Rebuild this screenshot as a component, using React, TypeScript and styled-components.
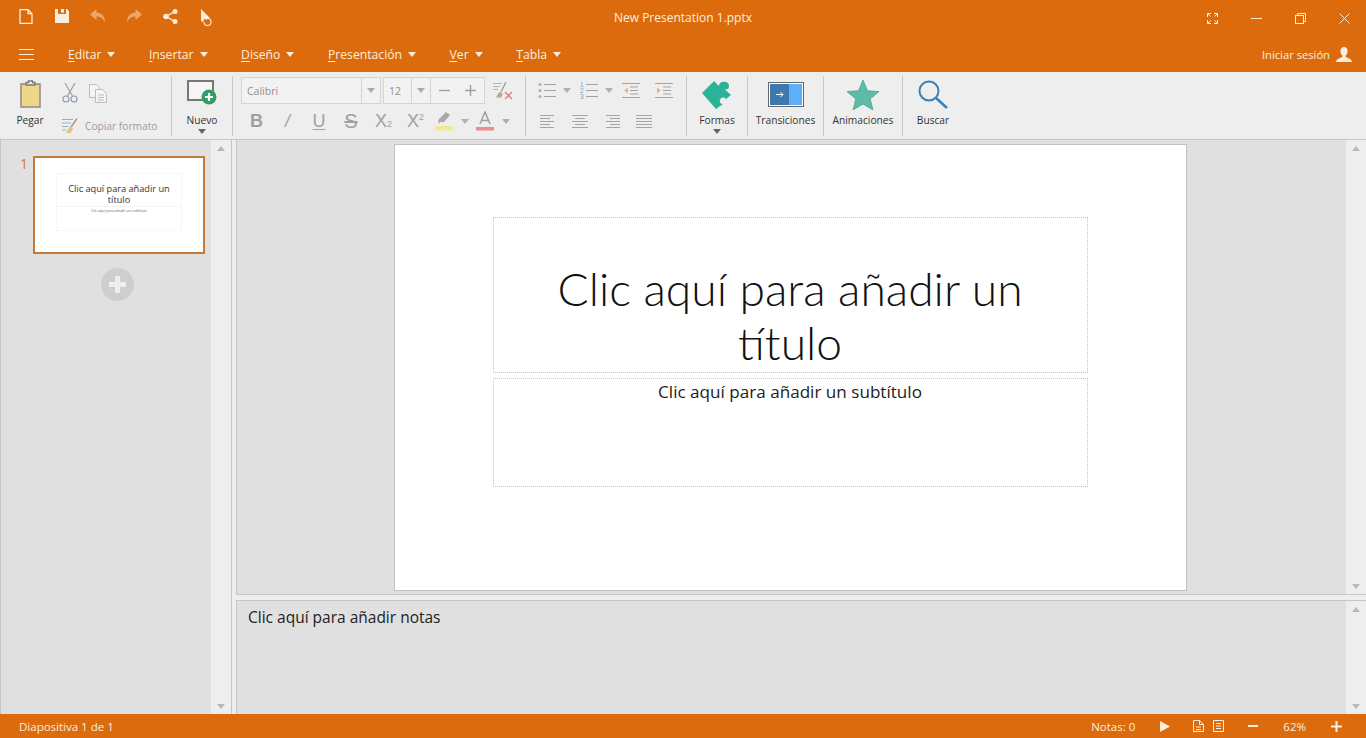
import React from "react";
import styled, { createGlobalStyle } from "styled-components";

const ORANGE = "#dc6b0e";
const CREAM = "#fbeedd";
const GRAY = "#a3a3a3";

const Global = createGlobalStyle`
  html, body { margin: 0; padding: 0; height: 100%; overflow: hidden; }
  body { font-family: "Open Sans", "Noto Sans", sans-serif; background: #eeeeee; color: #333; }
  svg { display: block; }
`;

const Page = styled.div`
  width: 1366px;
  height: 738px;
  display: flex;
  flex-direction: column;
`;

const Header = styled.header`
  background: ${ORANGE};
  color: ${CREAM};
  height: 72px;
  flex: none;
`;

const TitleRow = styled.div`
  height: 36px;
  display: grid;
  grid-template-columns: 1fr auto 1fr;
  align-items: center;
`;

const QuickBar = styled.div`
  display: flex;
  padding-left: 8px;
`;

const QuickSlot = styled.div<{ $faded?: boolean }>`
  width: 36px;
  display: flex;
  justify-content: center;
  opacity: ${(p) => (p.$faded ? 0.45 : 1)};
`;

const DocName = styled.div`
  font-size: 12px;
  line-height: 36px;
`;

const WindowBar = styled.div`
  display: flex;
  justify-content: flex-end;
`;

const WindowSlot = styled.div`
  width: 44px;
  display: flex;
  justify-content: center;
`;

const MenuRow = styled.nav`
  height: 36px;
  display: flex;
  align-items: center;
  padding-left: 19px;
`;

const Burger = styled.div`
  width: 49px;
`;

const MenuList = styled.div`
  display: flex;
  gap: 33.5px;
  flex: 1;
`;

const MenuItem = styled.div`
  display: flex;
  align-items: center;
  gap: 6px;
  font-size: 12.2px;
`;

const Arrow = styled.span<{ $color?: string }>`
  width: 0;
  height: 0;
  flex: none;
  border-left: 4.5px solid transparent;
  border-right: 4.5px solid transparent;
  border-top: 5px solid ${(p) => p.$color || CREAM};
`;

const SignIn = styled.div`
  display: flex;
  align-items: center;
  gap: 6px;
  font-size: 11.2px;
  padding-right: 14px;
`;

const Ribbon = styled.div`
  height: 67px;
  flex: none;
  display: flex;
  background: #eeeeee;
  border-bottom: 1px solid #c6c6c6;
  box-sizing: content-box;
`;

const Group = styled.div<{ $width: number }>`
  width: ${(p) => p.$width}px;
  flex: none;
  box-sizing: border-box;
  margin: 4px 0 3px;
  border-right: 1px solid #c8c8c8;
  &:last-child { border-right: none; }
`;

const BigTool = styled.div`
  height: 60px;
  display: flex;
  flex-direction: column;
  align-items: center;
`;

const BigIcon = styled.div`
  height: 36px;
  padding-top: 4px;
  box-sizing: border-box;
  display: flex;
  align-items: flex-start;
  justify-content: center;
`;

const BigLabel = styled.div`
  font-size: 10.2px;
  line-height: 14px;
  margin-top: 1px;
  color: #333;
`;

const SmallArrow = styled(Arrow)`
  margin-top: 2px;
`;

const PasteGroup = styled.div`
  display: flex;
  height: 60px;
  padding-left: 12px;
`;

const PasteCol = styled(BigTool)`
  width: 36px;
`;

const ClipTools = styled.div`
  margin-left: 14px;
  display: flex;
  flex-direction: column;
  justify-content: space-between;
  height: 58px;
  padding-top: 7px;
  box-sizing: border-box;
`;

const ClipRow = styled.div`
  display: flex;
  align-items: center;
  gap: 11px;
`;

const FormatRow = styled.div`
  display: flex;
  align-items: center;
  gap: 7px;
  font-size: 10.2px;
  color: #9b9b9b;
`;

const ToolColumn = styled.div`
  padding: 1px 0 0 8px;
  display: flex;
  flex-direction: column;
`;

const FieldRow = styled.div`
  display: flex;
  align-items: center;
  height: 27px;
`;

const Field = styled.div<{ $width: number; $offset: number }>`
  width: ${(p) => p.$width}px;
  height: 27px;
  box-sizing: border-box;
  background: #f2f2f2;
  border: 1px solid #d4d4d4;
  display: flex;
  align-items: center;
  margin-left: ${(p) => p.$offset}px;
  flex: none;
`;

const FieldText = styled.div`
  flex: 1;
  font-size: 10.5px;
  color: #8f8f8f;
  padding-left: 5px;
`;

const FieldDrop = styled.div`
  width: 18px;
  height: 100%;
  border-left: 1px solid #d4d4d4;
  display: flex;
  align-items: center;
  justify-content: center;
`;

const StepBtn = styled.div`
  flex: 1;
  display: flex;
  align-items: center;
  justify-content: center;
`;

const FormatBar = styled.div`
  display: flex;
  align-items: center;
  height: 26px;
  margin-top: 4px;
`;

const FormatSlot = styled.div<{ $width: number }>`
  width: ${(p) => p.$width}px;
  flex: none;
  display: flex;
  align-items: center;
  justify-content: center;
  gap: 8px;
`;

const GlyphText = styled.span`
  font-family: "Liberation Sans", sans-serif;
  font-size: 18px;
  color: #a0a0a0;
  line-height: 20px;
`;

const Bold = styled(GlyphText)`
  font-weight: 700;
`;

const Italic = styled(GlyphText)`
  font-style: italic;
`;

const Under = styled(GlyphText)`
  text-decoration: underline;
  text-underline-offset: 2px;
`;

const Strike = styled(GlyphText)`
  font-size: 20px;
  text-decoration: line-through;
`;

const Script = styled.span<{ $raised?: boolean }>`
  font-size: 9px;
  line-height: 0;
  position: relative;
  top: ${(p) => (p.$raised ? -7 : 0)}px;
`;

const ParaRow = styled.div<{ $indent?: number; $top: number }>`
  display: flex;
  align-items: center;
  height: 28px;
  margin-top: ${(p) => p.$top}px;
  padding-left: ${(p) => p.$indent ?? 12}px;
`;

const ParaSlot = styled.div<{ $width: number }>`
  width: ${(p) => p.$width}px;
  flex: none;
  display: flex;
  align-items: center;
  gap: 7px;
`;

const Body = styled.main`
  flex: 1;
  display: flex;
  min-height: 0;
  background: #eeeeee;
`;

const Sidebar = styled.aside`
  width: 232px;
  flex: none;
  display: flex;
  box-sizing: border-box;
  border-left: 1px solid #c6c6c6;
  border-right: 1px solid #c6c6c6;
`;

const ThumbList = styled.div`
  flex: 1;
  background: #e0e0e0;
  display: flex;
  flex-direction: column;
  padding-top: 16px;
`;

const ThumbRow = styled.div`
  display: flex;
  margin-left: 19px;
`;

const ThumbNumber = styled.div`
  width: 13px;
  font-size: 14px;
  line-height: 16px;
  color: #cc7a34;
`;

const Thumb = styled.div`
  width: 172px;
  height: 98px;
  box-sizing: border-box;
  background: #fff;
  border: 2px solid #c47a38;
  padding: 15px 21px 0;
`;

const ThumbInner = styled.div`
  height: 58px;
  border: 1px dotted #f0f0f0;
  display: flex;
  flex-direction: column;
  align-items: center;
  padding-top: 9px;
  box-sizing: border-box;
`;

const ThumbTitle = styled.div`
  font-size: 9.2px;
  line-height: 11px;
  text-align: center;
  color: #333;
  height: 24px;
  width: 100%;
  padding: 0 6px;
  box-sizing: border-box;
  border-bottom: 1px dotted #eeeeee;
`;

const ThumbSub = styled.div`
  font-size: 3.6px;
  line-height: 6px;
  margin-top: 1px;
  color: #666;
`;

const AddSlide = styled.div`
  width: 33px;
  height: 33px;
  border-radius: 50%;
  background: #cecece;
  margin: 14px 0 0 100px;
  display: flex;
  align-items: center;
  justify-content: center;
`;

const ScrollBar = styled.div`
  width: 20px;
  flex: none;
  background: #eeeeee;
  display: flex;
  flex-direction: column;
  align-items: center;
  justify-content: space-between;
  padding: 6px 0 5px;
  box-sizing: border-box;
`;

const ScrollUp = styled.span`
  width: 0;
  height: 0;
  border-left: 4.5px solid transparent;
  border-right: 4.5px solid transparent;
  border-bottom: 5px solid #b8b8b8;
`;

const ScrollDown = styled.span`
  width: 0;
  height: 0;
  border-left: 4.5px solid transparent;
  border-right: 4.5px solid transparent;
  border-top: 5px solid #b8b8b8;
`;

const RightCol = styled.div`
  flex: 1;
  margin-left: 4px;
  display: flex;
  flex-direction: column;
  min-width: 0;
`;

const CanvasPane = styled.div`
  height: 455px;
  flex: none;
  display: flex;
  box-sizing: border-box;
  border-left: 1px solid #c6c6c6;
  border-bottom: 1px solid #c6c6c6;
`;

const CanvasArea = styled.div`
  flex: 1;
  background: #e0e0e0;
  padding-top: 4px;
  display: flex;
  justify-content: center;
  align-items: flex-start;
`;

const Slide = styled.div`
  width: 793px;
  height: 447px;
  margin-left: -3px;
  box-sizing: border-box;
  background: #fff;
  border: 1px solid #c2c2c2;
  padding: 72px 98px 0;
  display: flex;
  flex-direction: column;
  gap: 5px;
`;

const TitleHolder = styled.div`
  height: 156px;
  box-sizing: border-box;
  border: 1px dotted #c4c4c4;
  text-align: center;
  font-family: Lato, "Open Sans", sans-serif;
  font-weight: 300;
  font-size: 46.2px;
  line-height: 54px;
  color: #111;
  padding: 43px 50px 0;
`;

const SubHolder = styled.div`
  height: 109px;
  box-sizing: border-box;
  border: 1px dotted #c4c4c4;
  text-align: center;
  font-size: 17.1px;
  line-height: 24px;
  padding-top: 1px;
  color: #222;
`;

const NotesPane = styled.div`
  flex: 1;
  margin-top: 5px;
  display: flex;
  box-sizing: border-box;
  border-left: 1px solid #c6c6c6;
  border-top: 1px solid #c6c6c6;
`;

const NotesArea = styled.div`
  flex: 1;
  background: #e0e0e0;
  padding: 6px 11px;
  font-size: 15.5px;
  line-height: 20px;
  color: #222;
`;

const Status = styled.footer`
  height: 24px;
  flex: none;
  background: ${ORANGE};
  color: ${CREAM};
  display: flex;
  align-items: center;
  justify-content: space-between;
  font-size: 11.5px;
  padding-left: 19px;
`;

const StatusRight = styled.div`
  display: flex;
  align-items: center;
  padding-right: 24px;
`;

const StatusItem = styled.div<{ $gap: number }>`
  margin-left: ${(p) => p.$gap}px;
`;

const Key = styled.span`
  text-decoration: underline;
  text-underline-offset: 2px;
`;

const Lines = ({ rows, stroke = GRAY }: { rows: number[][]; stroke?: string }) => (
  <svg width="18" height="15" viewBox="0 0 18 15">
    {rows.map(([x1, x2], i) => (
      <line key={i} x1={x1} x2={x2} y1={1.5 + i * 3} y2={1.5 + i * 3} stroke={stroke} strokeWidth="1" />
    ))}
  </svg>
);

const ListIcon = ({ numbered }: { numbered?: boolean }) => (
  <svg width="18" height="17" viewBox="0 0 18 17">
    {[2.5, 8.5, 14.5].map((y, i) =>
      numbered ? (
        <text key={i} x="0" y={y + 2.5} fontSize="6.5" fill="#7f9fb8" fontFamily="Liberation Sans">{i + 1}</text>
      ) : (
        <circle key={i} cx="2" cy={y} r="1.6" fill="#9db6cc" />
      )
    )}
    {[2.5, 8.5, 14.5].map((y) => (
      <line key={y} x1="6" x2="18" y1={y} y2={y} stroke={GRAY} />
    ))}
  </svg>
);

const IndentIcon = ({ flip }: { flip?: boolean }) => (
  <svg width="18" height="17" viewBox="0 0 18 17">
    {[1.5, 15.5].map((y) => <line key={y} x1="0" x2="18" y1={y} y2={y} stroke={GRAY} />)}
    {[5, 8.5, 12].map((y) => <line key={y} x1="8" x2="16" y1={y} y2={y} stroke={GRAY} />)}
    <path d={flip ? "M2 5.5L6 8.5L2 11.5Z" : "M6 5.5L2 8.5L6 11.5Z"} fill="#e8b48c" />
  </svg>
);

const SlideIcon = () => (
  <svg width="31" height="26" viewBox="0 0 31 26">
    <rect x="1" y="1" width="25" height="19" fill="#f6f6f6" stroke="#777" strokeWidth="2" />
    <circle cx="22" cy="17" r="7.5" fill="#2f9e68" />
    <path d="M22 13v8M18 17h8" stroke="#fff" strokeWidth="2.2" />
  </svg>
);

export default function App() {
  return (
    <Page>
      <Global />
      <Header>
        <TitleRow>
          <QuickBar>
            <QuickSlot>
              <svg width="14" height="15" viewBox="0 0 14 15" fill="none" stroke={CREAM} strokeWidth="1.3">
                <path d="M1 .7h8l4 4v9.6H1zM9 .7v4h4" />
              </svg>
            </QuickSlot>
            <QuickSlot>
              <svg width="14" height="14" viewBox="0 0 14 14">
                <path d="M0 0h3v5h8V0h1l2 2v12H0z" fill={CREAM} />
                <rect x="6" y="0" width="3" height="3.6" fill={CREAM} />
              </svg>
            </QuickSlot>
            <QuickSlot $faded>
              <svg width="16" height="14" viewBox="0 0 16 14">
                <path d="M6.5 0L0 5.5L6.5 11V7.5c4 0 6.5 1.5 8.5 6c0-6-3-9.5-8.5-10z" fill={CREAM} />
              </svg>
            </QuickSlot>
            <QuickSlot $faded>
              <svg width="16" height="14" viewBox="0 0 16 14">
                <path d="M9.500 0L16 5.500L9.500 11V7.500c-4 0-6.500 1.500-8.500 6c0-6 3-9.500 8.500-10z" fill={CREAM} />
              </svg>
            </QuickSlot>
            <QuickSlot>
              <svg width="15" height="15" viewBox="0 0 15 15">
                <path d="M12 2.500L3 7.500L12 12.500" fill="none" stroke={CREAM} strokeWidth="1.400" />
                <circle cx="12" cy="2.500" r="2.500" fill={CREAM} />
                <circle cx="3" cy="7.500" r="2.800" fill={CREAM} />
                <circle cx="12" cy="12.500" r="2.500" fill={CREAM} />
              </svg>
            </QuickSlot>
            <QuickSlot>
              <svg width="13" height="18" viewBox="0 0 13 18">
                <path d="M1 0L10 9L6 9.500L4 12.500L1 12.500z" fill={CREAM} />
                <circle cx="7.500" cy="13" r="4" fill={ORANGE} />
                <path d="M4 13a3.500 3.500 0 1 0 3.500-3.500H6" fill="none" stroke={CREAM} strokeWidth="1.100" />
                <path d="M7 8L4.800 9.500L7 11z" fill={CREAM} />
              </svg>
            </QuickSlot>
          </QuickBar>
          <DocName>New Presentation 1.pptx</DocName>
          <WindowBar>
            <WindowSlot>
              <svg width="11" height="11" viewBox="0 0 11 11" fill="none" stroke={CREAM}>
                <path d="M.5 4V.5H4M1 1l2.500 2.500M7 .5h3.500V4M10 1L7.500 3.500M.5 7v3.500H4M1 10l2.500-2.500M7 10.500h3.500V7M10 10L7.500 7.500" />
              </svg>
            </WindowSlot>
            <WindowSlot>
              <svg width="11" height="11" viewBox="0 0 11 11"><path d="M0 5.500h11" stroke={CREAM} /></svg>
            </WindowSlot>
            <WindowSlot>
              <svg width="11" height="11" viewBox="0 0 11 11" fill="none" stroke={CREAM}>
                <rect x=".5" y="2.500" width="8" height="8" />
                <path d="M2.500 2.500V.5h8v8h-2" />
              </svg>
            </WindowSlot>
            <WindowSlot>
              <svg width="11" height="11" viewBox="0 0 11 11"><path d="M.5.5l10 10M10.500.5l-10 10" stroke={CREAM} /></svg>
            </WindowSlot>
          </WindowBar>
        </TitleRow>
        <MenuRow>
          <Burger>
            <svg width="15" height="11" viewBox="0 0 15 11">
              <path d="M0 .5h15M0 5.500h15M0 10.500h15" stroke={CREAM} />
            </svg>
          </Burger>
          <MenuList>
            {["Editar", "Insertar", "Diseño", "Presentación", "Ver", "Tabla"].map((m) => (
              <MenuItem key={m}>
                <span><Key>{m[0]}</Key>{m.slice(1)}</span>
                <Arrow />
              </MenuItem>
            ))}
          </MenuList>
          <SignIn>
            Iniciar sesión
            <svg width="16" height="15" viewBox="0 0 16 15">
              <path d="M8 0c2.300 0 3.600 1.800 3.600 4s-1 4-2 4.800v1.200c2 .8 6.400 2 6.400 5H0c0-3 4.400-4.200 6.400-5V8.800c-1-.8-2-2.600-2-4.800S5.700 0 8 0z" fill={CREAM} />
            </svg>
          </SignIn>
        </MenuRow>
      </Header>

      <Ribbon>
        <Group $width={172}>
          <PasteGroup>
            <PasteCol>
              <BigIcon>
                <svg width="21" height="28" viewBox="0 0 21 28">
                  <rect x="1" y="4" width="19" height="23" fill="#efd78a" stroke="#8a8a8a" strokeWidth="1.500" />
                  <path d="M6 5V2.500h2.500V1h4v1.500H15V5z" fill="#eee" stroke="#777" strokeWidth="1.300" />
                </svg>
              </BigIcon>
              <BigLabel>Pegar</BigLabel>
            </PasteCol>
            <ClipTools>
              <ClipRow>
                <svg width="16" height="20" viewBox="0 0 16 20" fill="none" stroke="#8f9aa3" strokeWidth="1.100">
                  <path d="M3 0l7.500 13M13 0L5.500 13" />
                  <circle cx="4" cy="16" r="3" />
                  <circle cx="12" cy="16" r="3" />
                </svg>
                <svg width="18" height="19" viewBox="0 0 18 19" fill="#f4f4f4" stroke="#b4bec6">
                  <path d="M.5.5h7l3 3v10H.5z" />
                  <path d="M6.500 5.500h7l4 4v9h-11z" />
                  <path d="M9 11h6M9 13.500h6M9 16h6" />
                </svg>
              </ClipRow>
              <FormatRow>
                <svg width="16" height="16" viewBox="0 0 16 16">
                  <path d="M0 1.500h11M0 5h9M0 8.500h6M0 12h4" stroke="#8fb0c8" />
                  <path d="M15 .5L9 9" stroke="#999" strokeWidth="1.400" />
                  <path d="M8 8l3 2-2 5H4z" fill="#e5c08a" />
                </svg>
                Copiar formato
              </FormatRow>
            </ClipTools>
          </PasteGroup>
        </Group>
        <Group $width={61}>
          <BigTool>
            <BigIcon><SlideIcon /></BigIcon>
            <BigLabel>Nuevo</BigLabel>
            <SmallArrow $color="#666" />
          </BigTool>
        </Group>
        <Group $width={293}>
          <ToolColumn>
            <FieldRow>
              <Field $width={140} $offset={0}>
                <FieldText>Calibri</FieldText>
                <FieldDrop><Arrow $color="#aaa" /></FieldDrop>
              </Field>
              <Field $width={48} $offset={2}>
                <FieldText>12</FieldText>
                <FieldDrop><Arrow $color="#aaa" /></FieldDrop>
              </Field>
              <Field $width={55} $offset={-1}>
                <StepBtn>
                  <svg width="11" height="11" viewBox="0 0 11 11"><path d="M0 5.500h11" stroke="#a0a0a0" strokeWidth="1.400" /></svg>
                </StepBtn>
                <StepBtn>
                  <svg width="11" height="11" viewBox="0 0 11 11"><path d="M0 5.500h11M5.500 0v11" stroke="#a0a0a0" strokeWidth="1.400" /></svg>
                </StepBtn>
              </Field>
              <FormatSlot $width={36}>
                <svg width="20" height="18" viewBox="0 0 20 18">
                  <path d="M0 1.500h9M0 4.500h7M0 7.500h5" stroke="#b5b5b5" />
                  <path d="M13 0L8 10" stroke="#999" strokeWidth="1.300" />
                  <path d="M6 10l4 1.500-2 4H3z" fill="#b0a99f" />
                  <path d="M12 10l7 7M19 10l-7 7" stroke="#e8776c" strokeWidth="1.300" />
                </svg>
              </FormatSlot>
            </FieldRow>
            <FormatBar>
              <FormatSlot $width={31}><Bold>B</Bold></FormatSlot>
              <FormatSlot $width={31}><Italic>/</Italic></FormatSlot>
              <FormatSlot $width={32}><Under>U</Under></FormatSlot>
              <FormatSlot $width={32}><Strike>S</Strike></FormatSlot>
              <FormatSlot $width={33}><GlyphText>X<Script>2</Script></GlyphText></FormatSlot>
              <FormatSlot $width={31}><GlyphText>X<Script $raised>2</Script></GlyphText></FormatSlot>
              <FormatSlot $width={42}>
                <svg width="18" height="20" viewBox="0 0 18 20">
                  <path d="M11 1l4 3-6 7H5l-1 2-1-3 1-2z" fill="#a9a9a9" />
                  <rect x="0" y="15" width="18" height="4.500" fill="#f2ea92" />
                </svg>
                <Arrow $color="#b0b0b0" />
              </FormatSlot>
              <FormatSlot $width={40}>
                <svg width="18" height="20" viewBox="0 0 18 20">
                  <path d="M4 13L9 1l5 12M5.500 9.500h7" fill="none" stroke="#a0a0a0" strokeWidth="1.500" />
                  <rect x="0" y="16" width="18" height="3.500" fill="#e88e8e" />
                </svg>
                <Arrow $color="#b0b0b0" />
              </FormatSlot>
            </FormatBar>
          </ToolColumn>
        </Group>
        <Group $width={161}>
          <ParaRow $top={0}>
            <ParaSlot $width={42}><ListIcon /><Arrow $color="#b0b0b0" /></ParaSlot>
            <ParaSlot $width={42}><ListIcon numbered /><Arrow $color="#b0b0b0" /></ParaSlot>
            <ParaSlot $width={33}><IndentIcon /></ParaSlot>
            <ParaSlot $width={32}><IndentIcon flip /></ParaSlot>
          </ParaRow>
          <ParaRow $top={3} $indent={14}>
            <ParaSlot $width={32}><Lines rows={[[0, 14], [0, 10], [0, 14], [0, 10], [0, 14]]} /></ParaSlot>
            <ParaSlot $width={32}><Lines rows={[[0, 16], [3, 13], [0, 16], [3, 13], [0, 16]]} /></ParaSlot>
            <ParaSlot $width={32}><Lines rows={[[2, 16], [6, 16], [2, 16], [6, 16], [2, 16]]} /></ParaSlot>
            <ParaSlot $width={32}><Lines rows={[[0, 16], [0, 16], [0, 16], [0, 16], [0, 16]]} /></ParaSlot>
          </ParaRow>
        </Group>
        <Group $width={61}>
          <BigTool>
            <BigIcon>
              <svg width="30" height="29" viewBox="0 0 30 29">
                <path d="M0 13L12 1L17 6C17 2 21 1 24 2C27 3 28 6 26 9L23 9.500L29 15L24 19C22 17 19 17 18 20C17 22 19 24 21 24L14 29Z" fill="#2bb39a" />
              </svg>
            </BigIcon>
            <BigLabel>Formas</BigLabel>
            <SmallArrow $color="#666" />
          </BigTool>
        </Group>
        <Group $width={76}>
          <BigTool>
            <BigIcon>
              <svg width="36" height="25" viewBox="0 0 36 25" style={{ marginTop: 2 }}>
                <rect x=".5" y=".5" width="35" height="24" fill="#fff" stroke="#666" />
                <rect x="2" y="2" width="19" height="21" fill="#3e79ad" />
                <rect x="21" y="2" width="13" height="21" fill="#5cb0f5" />
                <path d="M8 12.500h7M12.500 10l2.500 2.500-2.500 2.500" fill="none" stroke="#fff" />
              </svg>
            </BigIcon>
            <BigLabel>Transiciones</BigLabel>
          </BigTool>
        </Group>
        <Group $width={79}>
          <BigTool>
            <BigIcon>
              <svg width="32" height="30" viewBox="0 0 32 30">
                <path d="M16 0l4.500 10.800L32 11.500l-8.800 7.400L26 30l-10-6-10 6 2.800-11.100L0 11.500l11.500-.7z" fill="#5dbba8" stroke="#3f9d8d" strokeWidth=".7" />
              </svg>
            </BigIcon>
            <BigLabel>Animaciones</BigLabel>
          </BigTool>
        </Group>
        <Group $width={60}>
          <BigTool>
            <BigIcon>
              <svg width="30" height="29" viewBox="0 0 30 29" fill="none" stroke="#3a80b5">
                <circle cx="11" cy="11" r="9.500" strokeWidth="2" />
                <path d="M18 18l11 10" strokeWidth="2.600" />
              </svg>
            </BigIcon>
            <BigLabel>Buscar</BigLabel>
          </BigTool>
        </Group>
      </Ribbon>

      <Body>
        <Sidebar>
          <ThumbList>
            <ThumbRow>
              <ThumbNumber>1</ThumbNumber>
              <Thumb>
                <ThumbInner>
                  <ThumbTitle>Clic aquí para añadir un título</ThumbTitle>
                  <ThumbSub>Clic aquí para añadir un subtítulo</ThumbSub>
                </ThumbInner>
              </Thumb>
            </ThumbRow>
            <AddSlide>
              <svg width="17" height="17" viewBox="0 0 17 17">
                <path d="M8.500 0v17M0 8.500h17" stroke="#eeeeee" strokeWidth="5" />
              </svg>
            </AddSlide>
          </ThumbList>
          <ScrollBar><ScrollUp /><ScrollDown /></ScrollBar>
        </Sidebar>
        <RightCol>
          <CanvasPane>
            <CanvasArea>
              <Slide>
                <TitleHolder>Clic aquí para añadir un título</TitleHolder>
                <SubHolder>Clic aquí para añadir un subtítulo</SubHolder>
              </Slide>
            </CanvasArea>
            <ScrollBar><ScrollUp /><ScrollDown /></ScrollBar>
          </CanvasPane>
          <NotesPane>
            <NotesArea>Clic aquí para añadir notas</NotesArea>
            <ScrollBar><ScrollUp /><ScrollDown /></ScrollBar>
          </NotesPane>
        </RightCol>
      </Body>

      <Status>
        <div>Diapositiva 1 de 1</div>
        <StatusRight>
          <StatusItem $gap={0}>Notas: 0</StatusItem>
          <StatusItem $gap={25}>
            <svg width="10" height="11" viewBox="0 0 10 11"><path d="M0 0l10 5.500L0 11z" fill={CREAM} /></svg>
          </StatusItem>
          <StatusItem $gap={23}>
            <svg width="11" height="12" viewBox="0 0 11 12" fill="none" stroke={CREAM}>
              <path d="M.5.5h6l4 4v7H.5zM6.500.5v4h4M3 7h5M3 9.500h5" />
            </svg>
          </StatusItem>
          <StatusItem $gap={9}>
            <svg width="11" height="12" viewBox="0 0 11 12" fill="none" stroke={CREAM}>
              <path d="M.5.5h10v11H.5zM3 3.500h5M3 6h5M3 8.500h5" />
            </svg>
          </StatusItem>
          <StatusItem $gap={24}>
            <svg width="10" height="10" viewBox="0 0 10 10"><path d="M0 5h10" stroke={CREAM} strokeWidth="2" /></svg>
          </StatusItem>
          <StatusItem $gap={25}>62%</StatusItem>
          <StatusItem $gap={25}>
            <svg width="11" height="11" viewBox="0 0 11 11"><path d="M0 5.500h11M5.500 0v11" stroke={CREAM} strokeWidth="2" /></svg>
          </StatusItem>
        </StatusRight>
      </Status>
    </Page>
  );
}
